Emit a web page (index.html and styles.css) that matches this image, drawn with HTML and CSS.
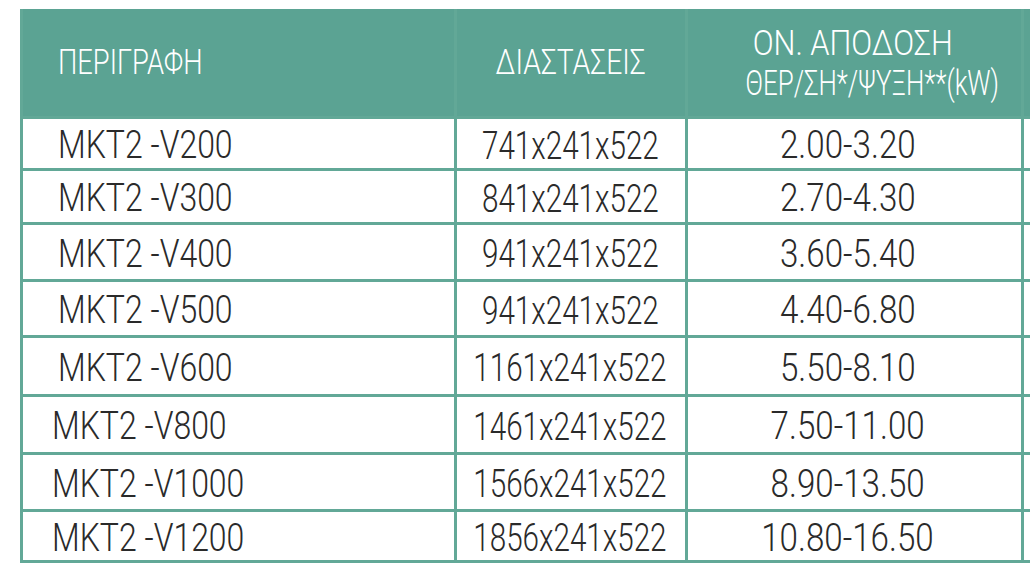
FILE: index.html
```html
<!DOCTYPE html>
<html lang="el">
<head>
<meta charset="utf-8">
<title>MKT2 -V</title>
<link rel="stylesheet" href="styles.css">
</head>
<body>
<div class="sheet">
  <div class="grid">
    <div class="hd hd-desc"><span class="t">ΠΕΡΙΓΡΑΦΗ</span></div>
    <div class="hd hd-dim"><span class="t">ΔΙΑΣΤΑΣΕΙΣ</span></div>
    <div class="hd hd-out">
      <span class="t line1">ΟΝ. ΑΠΟΔΟΣΗ</span>
      <span class="t line2">ΘΕΡ/ΣΗ*/ΨΥΞΗ**(kW)</span>
    </div>
    <div class="hd"></div>

    <div class="cell c-name"><span class="t">MKT2 -V200</span></div>
    <div class="cell c-dim"><span class="t">741x241x522</span></div>
    <div class="cell c-out"><span class="t">2.00-3.20</span></div>
    <div class="cell"></div>

    <div class="cell c-name"><span class="t">MKT2 -V300</span></div>
    <div class="cell c-dim"><span class="t">841x241x522</span></div>
    <div class="cell c-out"><span class="t">2.70-4.30</span></div>
    <div class="cell"></div>

    <div class="cell c-name"><span class="t">MKT2 -V400</span></div>
    <div class="cell c-dim"><span class="t">941x241x522</span></div>
    <div class="cell c-out"><span class="t">3.60-5.40</span></div>
    <div class="cell"></div>

    <div class="cell c-name"><span class="t">MKT2 -V500</span></div>
    <div class="cell c-dim"><span class="t">941x241x522</span></div>
    <div class="cell c-out"><span class="t">4.40-6.80</span></div>
    <div class="cell"></div>

    <div class="cell c-name"><span class="t">MKT2 -V600</span></div>
    <div class="cell c-dim"><span class="t">1161x241x522</span></div>
    <div class="cell c-out"><span class="t">5.50-8.10</span></div>
    <div class="cell"></div>

    <div class="cell c-name c-name-left"><span class="t">MKT2 -V800</span></div>
    <div class="cell c-dim"><span class="t">1461x241x522</span></div>
    <div class="cell c-out"><span class="t">7.50-11.00</span></div>
    <div class="cell"></div>

    <div class="cell c-name c-name-left"><span class="t">MKT2 -V1000</span></div>
    <div class="cell c-dim"><span class="t">1566x241x522</span></div>
    <div class="cell c-out"><span class="t">8.90-13.50</span></div>
    <div class="cell"></div>

    <div class="cell c-name c-name-left"><span class="t">MKT2 -V1200</span></div>
    <div class="cell c-dim"><span class="t">1856x241x522</span></div>
    <div class="cell c-out"><span class="t">10.80-16.50</span></div>
    <div class="cell"></div>
  </div>
</div>
</body>
</html>
```

FILE: styles.css
```css
html, body {
  margin: 0;
  padding: 0;
  background: #ffffff;
  overflow: hidden;
  width: 1030px;
  height: 576px;
}

.sheet {
  padding: 9px 0 0 20px;
}

.grid {
  display: grid;
  width: 1204px;
  grid-template-columns: 431px 228px 333px 200px;
  grid-template-rows: 107px 49px 51px 54px 53px 56px 55px 54px 48px;
  gap: 3px;
  padding: 0 0 3px 3px;
  background: #62a897;
}

.hd {
  background: #5ba393;
  color: #ffffff;
  display: flex;
  align-items: center;
  font-family: Roboto, "Liberation Sans", sans-serif;
  font-weight: 300;
  font-size: 35px;
  line-height: 40px;
}

.t {
  display: inline-block;
  white-space: nowrap;
}

.hd .t {
  transform: scaleX(0.78);
}

.hd-desc {
  padding-left: 35px;
}

.hd-desc .t {
  transform-origin: left center;
}

.hd-dim {
  justify-content: center;
}

.hd-dim .t {
  transform: scaleX(0.81);
}

.hd-out {
  flex-direction: column;
  justify-content: center;
  padding-top: 2px;
}

.hd-out .line1 {
  transform: scaleX(0.88);
  margin-right: 4px;
}

.hd-out .line2 {
  transform: scaleX(0.74);
  margin-left: 36px;
}

.cell {
  background: #ffffff;
  display: flex;
  align-items: center;
  padding-top: 4px;
  color: #2a2a2a;
  line-height: 1;
  font-family: Roboto, "Liberation Sans", sans-serif;
  font-weight: 300;
  font-size: 39px;
}

.c-name {
  padding-left: 35px;
}

.c-name .t {
  transform: scaleX(0.82);
  transform-origin: left center;
}

.c-name-left {
  padding-left: 29px;
}

.c-dim {
  justify-content: center;
  font-size: 38px;
  padding-right: 2px;
}

.c-dim .t {
  transform: scaleX(0.78);
}

.c-out {
  justify-content: center;
  padding-right: 14px;
}

.c-out .t {
  transform: scaleX(0.85);
}
```
